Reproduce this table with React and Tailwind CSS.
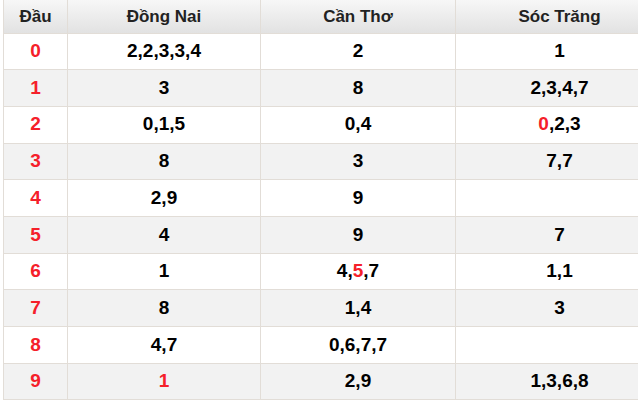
const ROWS = [
  { head: '0', cols: [['2,2,3,3,4'], ['2'], ['1']] },
  { head: '1', cols: [['3'], ['8'], ['2,3,4,7']] },
  { head: '2', cols: [['0,1,5'], ['0,4'], [{ r: '0' }, ',2,3']] },
  { head: '3', cols: [['8'], ['3'], ['7,7']] },
  { head: '4', cols: [['2,9'], ['9'], []] },
  { head: '5', cols: [['4'], ['9'], ['7']] },
  { head: '6', cols: [['1'], ['4,', { r: '5' }, ',7'], ['1,1']] },
  { head: '7', cols: [['8'], ['1,4'], ['3']] },
  { head: '8', cols: [['4,7'], ['0,6,7,7'], []] },
  { head: '9', cols: [[{ r: '1' }], ['2,9'], ['1,3,6,8']] },
];

function Cell({ parts }) {
  return parts.map((p, i) =>
    typeof p === 'string' ? (
      <span key={i}>{p}</span>
    ) : (
      <span key={i} className="text-[#f5202a]">{p.r}</span>
    )
  );
}

export default function App() {
  return (
    <div className="w-[638px] h-[400px] overflow-hidden bg-white pl-[3px] font-['Liberation_Sans',Arial,sans-serif]">
      <table className="w-[660px] border-collapse table-fixed">
        <colgroup>
          <col className="w-[64px]" />
          <col className="w-[193px]" />
          <col className="w-[195px]" />
          <col className="w-[208px]" />
        </colgroup>
        <thead>
          <tr className="h-[33px] bg-gradient-to-b from-[#f7f7f7] to-[#e2e2e2] text-[17px] font-bold text-[#222]">
            <th className="border border-[#e2ddd7] border-t-0">Đầu</th>
            <th className="border border-[#e2ddd7] border-t-0">Đồng Nai</th>
            <th className="border border-[#e2ddd7] border-t-0">Cần Thơ</th>
            <th className="border border-[#e2ddd7] border-t-0">Sóc Trăng</th>
          </tr>
        </thead>
        <tbody>
          {ROWS.map((row, i) => (
            <tr
              key={row.head}
              className={`h-[36.7px] text-[19px] font-bold text-black ${i % 2 ? 'bg-[#f2f2f2]' : 'bg-white'}`}
            >
              <td className="border border-[#e2ddd7] text-center text-[#f5202a]">{row.head}</td>
              {row.cols.map((c, j) => (
                <td key={j} className="border border-[#e2ddd7] text-center">
                  <Cell parts={c} />
                </td>
              ))}
            </tr>
          ))}
        </tbody>
      </table>
    </div>
  );
}
